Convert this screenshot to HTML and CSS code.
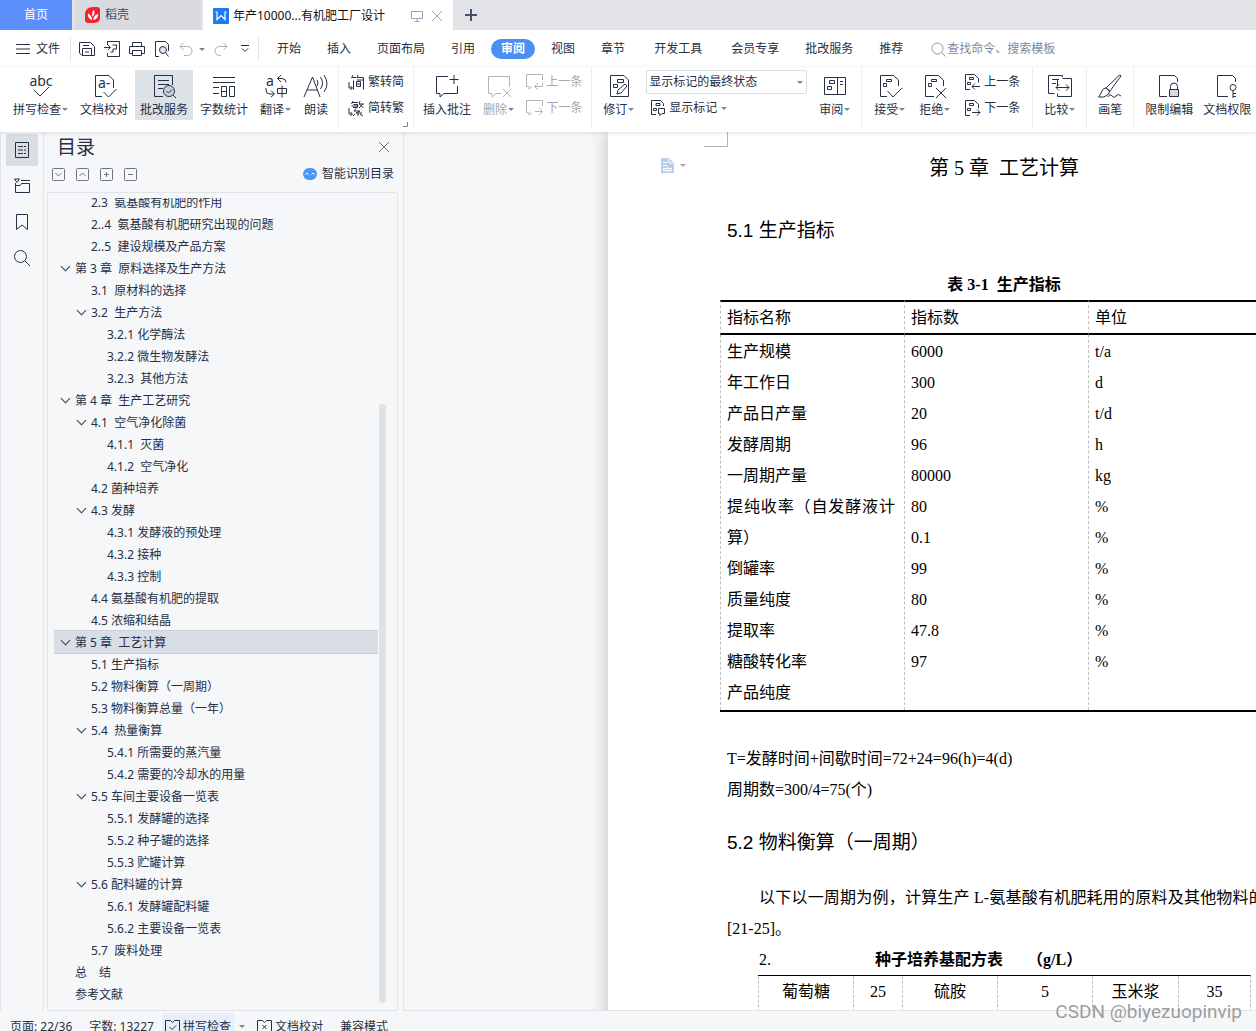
FILE: index.html
```html
<!DOCTYPE html>
<html lang="zh-CN">
<head>
<meta charset="utf-8">
<title>年产10000...有机肥工厂设计</title>
<link rel="stylesheet" href="styles.css">
</head>
<body>
<div class="app">
  <header class="tabs">
    <button class="tab tab-home">首页</button>
    <button class="tab tab-docer">
      <svg width="16" height="16" viewBox="0 0 16 16"><path d="M8 0h4q3 0 3 3v8q0 5-7 5H3q-3 0-3-3V8q0-8 8-8z" fill="#f5222d"/><path d="M7.200 13C3.500 11.500 2.500 9 3 6.500c2.300 1 3.800 3.200 4.200 6.500zM7.600 10C6.600 7 7 4.500 9 2.800c1 2.600.6 5-1.400 7.200zM8.300 13c0-3 1.500-5.300 4.900-6.300.3 3.300-1.500 5.500-4.900 6.300z" fill="#fff"/></svg>
      稻壳
    </button>
    <div class="tab tab-doc">
      <svg width="16" height="16" viewBox="0 0 16 16"><rect width="16" height="16" rx="1" fill="#1f7cf0"/><path d="M2.500 4H4v7.500l4-4 4 4V4h1.500" fill="none" stroke="#fff" stroke-width="1.200"/></svg>
      <span class="tab-name">年产10000...有机肥工厂设计</span>
      <svg class="dim" width="12" height="12" viewBox="0 0 12 12"><path d="M.5 1.500h11v7H.5zM6 8.500v3M3.500 11.500h5"/></svg>
      <button class="plain" aria-label="关闭"><svg class="dim" width="12" height="12" viewBox="0 0 12 12"><path d="M1 1l10 10M11 1L1 11"/></svg></button>
    </div>
    <button class="plain tab-add" aria-label="新建"><svg width="12" height="12" viewBox="0 0 12 12"><path d="M6 0v12M0 6h12" stroke="#45516d" stroke-width="2"/></svg></button>
  </header>

  <nav class="menubar">
    <button class="plain file"><svg width="14" height="10" viewBox="0 0 14 10"><path d="M0 .5h14M0 5h14M0 9.500h14"/></svg>文件</button>
    <div class="quick">
      <button class="plain" aria-label="保存"><svg width="16" height="16" viewBox="0 0 16 16"><path d="M.5 1.500h11l4 4v9H3L.5 12zM3.500 14V7.500h9V14M4 4.500h6M6 11h4"/></svg></button>
      <button class="plain" aria-label="输出为PDF"><svg width="16" height="16" viewBox="0 0 16 16"><path d="M3.500 4V.5h12v15h-12V12M0 6.500h6M4 4l2.500 2.500L4 9M8.500 4h4v4H9M9 8v3H6.500"/></svg></button>
      <button class="plain" aria-label="打印"><svg width="16" height="16" viewBox="0 0 16 16"><path d="M3.500 5V1.500h9V5M3.500 12.500h-3v-7h15v7h-3M3.500 9.500h9v5h-9z"/></svg></button>
      <button class="plain" aria-label="打印预览"><svg width="16" height="16" viewBox="0 0 16 16"><path d="M5 15.500H1.500V.5h10l3 3V10"/><circle cx="9" cy="9" r="3.500" fill="#dfe3ea"/><path d="M11.500 11.500l3 4"/></svg></button>
      <button class="plain undo" aria-label="撤销"><svg class="off" width="14" height="14" viewBox="0 0 14 14"><path d="M4.500 1L1 4.500 4.500 8M1 4.500h7.500a4.500 4.500 0 0 1 0 9H5"/></svg><i class="caret"></i></button>
      <button class="plain" aria-label="恢复"><svg class="off" width="14" height="14" viewBox="0 0 14 14"><path d="M9.500 1L13 4.500 9.500 8M13 4.500H5.500a4.500 4.500 0 0 0 0 9H7"/></svg></button>
      <button class="plain more" aria-label="自定义"><svg width="8" height="8" viewBox="0 0 8 8"><path d="M0 .5h8M1 3.500l3 3 3-3"/></svg></button>
    </div>
    <div class="menus">
      <button class="menu">开始</button><button class="menu">插入</button><button class="menu">页面布局</button><button class="menu">引用</button><button class="menu active">审阅</button><button class="menu">视图</button><button class="menu">章节</button><button class="menu wide">开发工具</button><button class="menu wide">会员专享</button><button class="menu">批改服务</button><button class="menu">推荐</button>
    </div>
    <label class="find"><svg width="15" height="15" viewBox="0 0 15 15"><circle cx="6.500" cy="6.500" r="5.500"/><path d="M10.500 10.500l4 4"/></svg><input type="text" placeholder="查找命令、搜索模板" aria-label="查找命令"></label>
  </nav>

  <section class="ribbon">
    <div class="group first">
      <button class="big"><svg width="26" height="24" viewBox="0 0 26 24"><text x="13" y="12" text-anchor="middle" class="glyph">abc</text><path d="M6 16l6 6 9-9"/></svg><span>拼写检查<i class="caret"></i></span></button>
      <button class="big"><svg width="24" height="24" viewBox="0 0 24 24"><path d="M10 22.500H3.500v-21H17l4.500 4.500v8M11.500 18l5 5 8-8"/><text x="6" y="14" class="glyph">a-</text></svg><span>文档校对</span></button>
      <button class="big on"><svg width="24" height="24" viewBox="0 0 24 24"><path d="M11 22.500H2.500v-21h18V11M6 6.500h11M6 10.500h11M6 14.500h5"/><circle cx="17" cy="17" r="5.500" fill="#c9d0d9"/><path d="M14.500 17l2 2 3.500-3.500M21 21l3 3"/></svg><span>批改服务</span></button>
      <button class="big"><svg width="24" height="24" viewBox="0 0 24 24"><path d="M1 3.500h22M1 8.500h22M1 13.500h6M1 19.500h6M9.500 12.500h5v10h-5zM9.500 17.500h5M17.500 12.500h5v10h-5z"/></svg><span>字数统计</span></button>
      <button class="big"><svg width="24" height="24" viewBox="0 0 24 24"><text x="2" y="12" class="glyph">a</text><path d="M17 1l-3.500 3.500L17 8M13.500 4.500H18a4 4 0 0 1 4 4M2 14v2a4 4 0 0 0 4 4h4M7 16.500l3.500 3.500L7 23M13.500 14.500h9v5h-9zM18 11.500v12"/></svg><span>翻译<i class="caret"></i></span></button>
      <button class="big"><svg width="26" height="24" viewBox="0 0 26 24"><path d="M1 23L9.500 3 17 23M4 16h10.500M14 6q2 3 0 6M17.500 3q4 6 0 12M21 1q6 9 0 17"/></svg><span>朗读</span></button>
    </div>
    <div class="group">
      <div class="stack">
        <button class="small"><svg width="17" height="16" viewBox="0 0 17 16"><path d="M5 1L3.500 4M10 1l-1 3M4 3.500h4M9 3.500h6.500v12M5.500 6.500v9M8.500 7.500h4v5h-4zM8.500 10h4M1 8v6h3M2.500 12l2 2-2 2M9 6h6"/></svg>繁转简</button>
        <button class="small"><svg width="17" height="16" viewBox="0 0 17 16"><path d="M5 1L3.500 4M4 2.500h6M5.500 4.500h4v3H5M3.500 6h7M12 1l-1 3h5M15 4l-4 4M11.500 4l4 4M8 8.500L6 11h6l-4 2h6M10 13v3M1 8v6h3M2.500 12l2 2-2 2M7 14l-2 2M12 14l3 2"/></svg>简转繁</button>
      </div>
      <svg class="corner" width="5" height="5" viewBox="0 0 5 5"><path d="M4.500 0v4.500H0"/></svg>
    </div>
    <div class="group">
      <button class="big"><svg width="24" height="24" viewBox="0 0 24 24"><path d="M13 2.500H1.500v17H5V23l4-3.500h13.500V12M19 1v9M14.500 5.500h9"/></svg><span>插入批注</span></button>
      <button class="big off"><svg width="24" height="24" viewBox="0 0 24 24"><path d="M14 19.500H9L5 23v-3.500H1.500v-17h21V13M16 15l8 8M24 15l-8 8"/></svg><span>删除<i class="caret"></i></span></button>
      <div class="stack">
        <button class="small off"><svg width="17" height="16" viewBox="0 0 17 16"><path d="M16.500 6V.5H.5v12H3V15l3-2.500M9 12.500h7.500V9M12 9l-3.500 3.500L12 16"/></svg>上一条</button>
        <button class="small off"><svg width="17" height="16" viewBox="0 0 17 16"><path d="M16.500 6V.5H.5v12H3V15l3-2.500M9 11.500h7M13 8l3.500 3.500L13 15"/></svg>下一条</button>
      </div>
    </div>
    <div class="group">
      <button class="big"><svg width="24" height="24" viewBox="0 0 24 24"><path d="M17 1.500H3.500v21h18V6L17 1.500M10.500 5.500h6v3h-6zM6.500 10.500h4v3h-4zM10 20l1-4 7-6 2 2-6 7z"/></svg><span>修订<i class="caret"></i></span></button>
      <div class="stack">
        <div class="view"><select aria-label="显示方式"><option>显示标记的最终状态</option></select><i class="caret"></i></div>
        <button class="small mark"><svg width="16" height="16" viewBox="0 0 16 16"><path d="M6 14.500H1.500V.5h9l3 3V6M6 3.500h4v2H6zM3.500 8.500h3v2h-3zM8.500 8.500h6v5H12L10 15.500v-2H8.500z"/></svg>显示标记<i class="caret"></i></button>
      </div>
      <button class="big"><svg width="24" height="24" viewBox="0 0 24 24"><path d="M1.500 3.500h21v17h-21zM14.500 3.500v17M6.500 6.500h5v3h-5zM4.500 12.500h4v3h-4zM17 7.500h3M17 10.500h3"/></svg><span>审阅<i class="caret"></i></span></button>
    </div>
    <div class="group changes">
      <button class="big"><svg width="24" height="24" viewBox="0 0 24 24"><path d="M9 22.500H2.500v-21h13L20.500 6v6M8.500 5.500h5v2h-5zM5.500 9.500h3v3h-3zM9.500 17l5.500 6 9-9"/></svg><span>接受<i class="caret"></i></span></button>
      <button class="big"><svg width="24" height="24" viewBox="0 0 24 24"><path d="M11 22.500H2.500v-21h13L20.500 6v6M8.500 5.500h5v2h-5zM5.500 9.500h3v3h-3zM13 14l10 10M23 14L13 24"/></svg><span>拒绝<i class="caret"></i></span></button>
      <div class="stack">
        <button class="small"><svg width="17" height="16" viewBox="0 0 17 16"><path d="M6 15.500H1.500V.5h9l4 4v4M5.500 3.500h4v2h-4zM3.500 8.500h3v2h-3zM8 12.500h8M11 9.500l-3 3 3 3"/></svg>上一条</button>
        <button class="small"><svg width="17" height="16" viewBox="0 0 17 16"><path d="M6 15.500H1.500V.5h9l4 4v4M5.500 3.500h4v2h-4zM3.500 8.500h3v2h-3zM8 12.500h8M13 9.500l3 3-3 3"/></svg>下一条</button>
      </div>
    </div>
    <div class="group">
      <button class="big"><svg width="26" height="24" viewBox="0 0 26 24"><path d="M15.500 3V1.500h-14v18h6M5 5.500h7M5 9.500h4M15.500 4.500h9v18h-14v-3M10.500 12v-7M9 13.500h13M12 10.500l-3 3 3 3M19 10.500l3 3-3 3"/></svg><span>比较<i class="caret"></i></span></button>
    </div>
    <div class="group">
      <button class="big"><svg width="24" height="24" viewBox="0 0 24 24"><path d="M8 14L21 1.500q1.500-1 2 .5L12 17zM8 14q-3 0-4 3t-3.500 6q6 1 9-2 2-2 2-4zM10 23q2-4 4-1t4 0 5 0"/></svg><span>画笔</span></button>
    </div>
    <div class="group last">
      <button class="big"><svg width="24" height="24" viewBox="0 0 24 24"><path d="M10 22.500H2.500v-21h15l3 3V8"/><path d="M13.500 15v-2.500a3.500 3.500 0 0 1 7 0V15"/><path d="M12.500 15.500h9v7h-9z" fill="#d5d9e0"/></svg><span>限制编辑</span></button>
      <button class="big"><svg width="24" height="24" viewBox="0 0 24 24"><path d="M13 22.500H2.500v-21h15l3 3V8"/><circle cx="18" cy="13.500" r="3"/><path d="M18 17v7M18 19.500h3M18 22.500h3"/></svg><span>文档权限</span></button>
    </div>
  </section>

  <main class="work">
    <aside class="rail">
      <button class="rail-btn on" aria-label="目录"><svg width="16" height="16" viewBox="0 0 16 16"><path d="M1.500.5h13v15h-13zM4 4.500h5M10 4.500h2M4 8h5M10 8h2M4 11.500h5M10 11.500h2"/></svg></button>
      <button class="rail-btn" aria-label="导航"><svg width="16" height="16" viewBox="0 0 16 16"><path d="M.5 1h5L3 4.500zM1.500 5v9.500h14v-9h-8L6 7.500H1.500M7 2.500h9"/></svg></button>
      <button class="rail-btn" aria-label="书签"><svg width="16" height="18" viewBox="0 0 16 18"><path d="M2.500 1.500h11v15L8 12l-5.500 4.500z"/></svg></button>
      <button class="rail-btn" aria-label="查找"><svg width="16" height="16" viewBox="0 0 16 16"><circle cx="6.500" cy="6.500" r="6"/><path d="M11 11l5 5"/></svg></button>
    </aside>

    <aside class="outline">
      <div class="outline-head"><h2>目录</h2><button class="plain" aria-label="关闭目录"><svg class="grey" width="10" height="10" viewBox="0 0 10 10"><path d="M0 0l10 10M10 0L0 10"/></svg></button></div>
      <div class="outline-tools">
        <button class="plain" aria-label="展开"><svg class="grey" width="13" height="13" viewBox="0 0 13 13"><rect x=".5" y=".5" width="12" height="12" rx="1"/><path d="M3.500 5l3 3 3-3"/></svg></button>
        <button class="plain" aria-label="折叠"><svg class="grey" width="13" height="13" viewBox="0 0 13 13"><rect x=".5" y=".5" width="12" height="12" rx="1"/><path d="M3.500 8l3-3 3 3"/></svg></button>
        <button class="plain" aria-label="升级"><svg class="grey" width="13" height="13" viewBox="0 0 13 13"><rect x=".5" y=".5" width="12" height="12" rx="1"/><path d="M4 6.500h5M6.500 4v5"/></svg></button>
        <button class="plain" aria-label="降级"><svg class="grey" width="13" height="13" viewBox="0 0 13 13"><rect x=".5" y=".5" width="12" height="12" rx="1"/><path d="M4 6.500h5"/></svg></button>
        <button class="plain smart"><svg width="14" height="12" viewBox="0 0 14 12"><rect width="14" height="12" rx="6" fill="#4a97f5" stroke="none"/><path d="M2.500 6.500l1.500-1.500 1.500 1.500M8.500 6.500L10 5l1.500 1.500" stroke="#fff"/></svg>智能识别目录</button>
      </div>
      <div class="tree">
        <ul>
          <li class="l2">2.3&nbsp; 氨基酸有机肥的作用</li>
          <li class="l2">2..4&nbsp; 氨基酸有机肥研究出现的问题</li>
          <li class="l2">2..5&nbsp; 建设规模及产品方案</li>
          <li class="l1 open">第 3 章&nbsp; 原料选择及生产方法</li>
          <li class="l2">3.1&nbsp; 原材料的选择</li>
          <li class="l2 open">3.2&nbsp; 生产方法</li>
          <li class="l3">3.2.1 化学酶法</li>
          <li class="l3">3.2.2 微生物发酵法</li>
          <li class="l3">3.2.3&nbsp; 其他方法</li>
          <li class="l1 open">第 4 章&nbsp; 生产工艺研究</li>
          <li class="l2 open">4.1&nbsp; 空气净化除菌</li>
          <li class="l3">4.1.1&nbsp; 灭菌</li>
          <li class="l3">4.1.2&nbsp; 空气净化</li>
          <li class="l2">4.2 菌种培养</li>
          <li class="l2 open">4.3 发酵</li>
          <li class="l3">4.3.1 发酵液的预处理</li>
          <li class="l3">4.3.2 接种</li>
          <li class="l3">4.3.3 控制</li>
          <li class="l2">4.4 氨基酸有机肥的提取</li>
          <li class="l2">4.5 浓缩和结晶</li>
          <li class="l1 open current">第 5 章&nbsp; 工艺计算</li>
          <li class="l2">5.1 生产指标</li>
          <li class="l2">5.2 物料衡算（一周期）</li>
          <li class="l2">5.3 物料衡算总量（一年）</li>
          <li class="l2 open">5.4&nbsp; 热量衡算</li>
          <li class="l3">5.4.1 所需要的蒸汽量</li>
          <li class="l3">5.4.2 需要的冷却水的用量</li>
          <li class="l2 open">5.5 车间主要设备一览表</li>
          <li class="l3">5.5.1 发酵罐的选择</li>
          <li class="l3">5.5.2 种子罐的选择</li>
          <li class="l3">5.5.3 贮罐计算</li>
          <li class="l2 open">5.6 配料罐的计算</li>
          <li class="l3">5.6.1 发酵罐配料罐</li>
          <li class="l3">5.6.2 主要设备一览表</li>
          <li class="l2">5.7&nbsp; 废料处理</li>
          <li class="l1">总　结</li>
          <li class="l1">参考文献</li>
        </ul>
        <div class="track"><div class="thumb"></div></div>
      </div>
    </aside>

    <section class="canvas">
      <article class="page">
        <i class="crop"></i>
        <button class="plain para-mark" aria-label="段落布局"><svg width="13" height="15" viewBox="0 0 13 15"><path d="M0 0h8l5 5v10H0z" fill="#b9cdec" stroke="none"/><path d="M8 0v5h5M2 4.500h4M2 7.500h4M2.500 10.500h8v2h-8zM6.500 9v1.500M6.500 12.500V14" stroke="#fff"/></svg><i class="caret"></i></button>
        <h1>第 5 章&nbsp; 工艺计算</h1>
        <h2>5.1 生产指标</h2>
        <table class="indicators">
          <caption>表 3-1&nbsp; 生产指标</caption>
          <colgroup><col class="wide-col"><col class="wide-col"><col></colgroup>
          <thead><tr><th>指标名称</th><th>指标数</th><th>单位</th></tr></thead>
          <tbody><tr>
            <td><p>生产规模</p><p>年工作日</p><p>产品日产量</p><p>发酵周期</p><p>一周期产量</p><p>提纯收率（自发酵液计算）</p><p>倒罐率</p><p>质量纯度</p><p>提取率</p><p>糖酸转化率</p><p>产品纯度</p></td>
            <td><p>6000</p><p>300</p><p>20</p><p>96</p><p>80000</p><p>80</p><p>0.1</p><p>99</p><p>80</p><p>47.8</p><p>97</p></td>
            <td class="unit"><p>t/a</p><p>d</p><p>t/d</p><p>h</p><p>kg</p><p>%</p><p>%</p><p>%</p><p>%</p><p>%</p><p>%</p></td>
          </tr></tbody>
        </table>
        <p>T=发酵时间+间歇时间=72+24=96(h)=4(d)</p>
        <p>周期数=300/4=75(个)</p>
        <h2 class="second">5.2 物料衡算（一周期）</h2>
        <p class="indent">以下以一周期为例，计算生产 L-氨基酸有机肥耗用的原料及其他物料的量[21-25]。</p>
        <p class="recipe-title"><span>2.</span><b>种子培养基配方表</b><b>（g/L）</b></p>
        <table class="recipe"><colgroup><col class="c1"><col class="c2"><col class="c3"><col class="c3"><col class="c4"><col class="c5"></colgroup>
          <tr><td>葡萄糖</td><td>25</td><td>硫胺</td><td>5</td><td>玉米浆</td><td>35</td></tr></table>
      </article>
    </section>
  </main>

  <footer class="status">
    <span class="st">页面: 22/36</span><span class="st">字数: 13227</span>
    <button class="plain st hot"><svg width="15" height="14" viewBox="0 0 15 14"><path d="M5.500.5h-5v13h14V.5h-5L7.500 2.500zM4.500 7l2.500 2.500L11 5.500"/></svg>拼写检查</button><i class="caret"></i>
    <button class="plain st check"><svg width="15" height="14" viewBox="0 0 15 14"><path d="M5.500.5h-5v13h14V.5h-5L7.500 2.500zM5.500 5l4 4M9.500 5l-4 4"/></svg>文档校对</button><span class="st">兼容模式</span>
  </footer>
  <div class="watermark">CSDN @biyezuopinvip</div>
</div>
</body>
</html>
```
FILE: styles.css
```css
* { box-sizing: border-box; }
body {
  margin: 0;
  font: 12px/16px "Noto Sans", "Noto Sans CJK SC", sans-serif;
  color: #262f45;
  background: #f6f7f9;
}
button, input, select { font: inherit; color: inherit; }
button { border: 0; background: none; padding: 0; white-space: nowrap; }
h1, h2, p, ul { margin: 0; padding: 0; }
svg { display: block; flex: none; overflow: visible; fill: none; stroke: #262f45; stroke-width: 1; }
.app {
  position: relative;
  height: 100vh;
  display: flex;
  flex-direction: column;
  overflow: hidden;
}
.plain { display: inline-flex; align-items: center; }
.caret {
  display: inline-block;
  flex: none;
  border: 3px solid transparent;
  border-top: 3px solid #7c859a;
  border-bottom: 0;
}
svg.off { stroke: #a9aeb8; }
svg.grey { stroke: #70757f; }

/* window tabs */
.tabs { display: flex; flex: none; height: 30px; background: #e2e4e8; }
.tabs svg { stroke: none; }
.tabs svg.dim { stroke: #98a3bb; }
.tab { display: flex; align-items: center; }
.tab-home { width: 72px; justify-content: center; background: #5d8ffc; color: #fff; }
.tab-docer { width: 126px; margin: 0 2px 0 3px; padding-left: 10px; gap: 4px; background: #d9dbdf; color: #454b58; }
.tab-doc { width: 250px; padding: 2px 10px 0; gap: 4px; background: #fff; color: #111; }
.tab-name { flex: 1; }
.tab-doc .plain { margin-left: 4px; }
.tab-add { margin-left: 12px; }

/* menu row */
.menubar { display: flex; flex: none; align-items: center; height: 37px; padding-top: 1px; background: #fff; }
.file { gap: 6px; padding: 0 10px 0 16px; height: 24px; border-right: 1px solid #e0e2e6; }
.quick { display: flex; align-items: center; gap: 9px; height: 24px; padding: 0 9px 0 8px; border-right: 1px solid #e0e2e6; }
.undo { gap: 6px; }
.more { margin-left: 4px; }
.menus { display: flex; padding-left: 5px; }
.menu { height: 20px; padding: 0 10px; margin: 0 3px; }
.menu.wide { margin-left: 6px; }
.menu.active { border-radius: 10px; background: #4a8ff2; color: #fff; font-weight: bold; }
.find { display: flex; align-items: center; flex: 1; margin-left: 15px; gap: 1px; }
.find svg { stroke: #8b96ae; }
.find input { flex: 1; min-width: 0; border: 0; padding: 0; outline: 0; background: none; }
.find input::placeholder { color: #7e88a0; opacity: 1; }

/* ribbon */
.ribbon { position: relative; z-index: 2; display: flex; flex: none; height: 65px; background: #fff; box-shadow: 0 1px 4px #0000001f; }
.group { position: relative; display: flex; flex: none; gap: 2px; height: 62px; padding: 3px 6px 0; border-right: 1px solid #eceef0; }
.group:nth-child(-n+3) { padding: 3px 4px 0; }
.group.first { padding-left: 8px; }
.group.changes { gap: 4px; padding: 3px 7px 0; }
.group.last { gap: 0; border: 0; }
.big { display: flex; flex-direction: column; align-items: center; height: 50px; padding: 4px 5px 0; gap: 4px; }
.big.on { background: #dde2e7; }
.big .caret { margin: 0 0 3px 1px; }
.off { color: #a3a7af; }
.off svg { stroke: #b0b4bc; }
.glyph { font: 14px "Noto Sans", sans-serif; fill: #262f45; stroke: none; }
.stack { display: flex; flex-direction: column; gap: 2px; padding: 0 5px; }
.small { display: flex; align-items: center; gap: 3px; height: 24px; }
.small .caret { margin-left: 1px; }
.mark { padding-left: 4px; }
.view {
  display: flex;
  align-items: center;
  width: 161px;
  height: 24px;
  padding-right: 3px;
  border: 1px solid #d9dce1;
  border-radius: 2px;
}
.view select { flex: 1; appearance: none; border: 0; padding: 0 2px; background: none; }
.corner { position: absolute; right: 5px; bottom: 2px; stroke: #7c859a; }

/* work area */
.work { display: flex; flex: 1; min-height: 0; }
.rail { display: flex; flex: none; flex-direction: column; align-items: center; gap: 4px; width: 44px; padding-top: 2px; border-right: 1px solid #e1e4e8; border-left: 1px solid #e1e4e8; }
.rail-btn { display: flex; align-items: center; justify-content: center; width: 32px; height: 32px; border-radius: 2px; }
.rail-btn.on { background: #d9dee5; }
.outline { display: flex; flex: none; flex-direction: column; width: 360px; padding: 0 5px 0 3px; border-right: 1px solid #e1e4e8; }
.outline-head { display: flex; justify-content: space-between; align-items: center; height: 30px; padding: 0 9px 0 10px; }
.outline-head h2 { font-size: 19px; line-height: 28px; font-weight: normal; }
.outline-tools { display: flex; align-items: center; gap: 11px; height: 24px; padding: 0 4px 0 5px; }
.smart { margin-left: auto; gap: 5px; }
.tree { display: flex; flex: 1; min-height: 0; margin-top: 6px; padding: 5px 11px 0 6px; border: 1px solid #e0e3e8; border-radius: 2px; overflow: hidden; }
.tree ul { flex: 1; list-style: none; overflow: hidden; }
.tree li { height: 22px; line-height: 24px; white-space: nowrap; }
.tree li:first-child { margin-top: -7px; }
.tree .l1 { padding-left: 21px; }
.tree .l2 { padding-left: 37px; }
.tree .l3 { padding-left: 53px; }
.tree .current { background: #d9dde6; box-shadow: 0 0 0 1px #cbd1da; }
.open::before {
  content: "";
  display: inline-block;
  width: 6px;
  height: 6px;
  margin: 0 6px 3px -13px;
  border: solid #39425a;
  border-width: 0 1px 1px 0;
  transform: rotate(45deg);
}
.track { width: 8px; padding: 206px 0 7px 1px; }
.thumb { height: 100%; border-radius: 4px; background: #dee2e5; }

/* document */
.canvas { flex: 1; min-width: 0; padding-left: 204px; overflow: hidden; border-bottom: 1px solid #dfe2e6; }
.page {
  position: relative;
  width: 793px;
  min-height: 1122px;
  padding: 20px 120px 0 119px;
  background: #fff;
  color: #000;
  box-shadow: 0 0 18px #0000003d;
  font: 16px/31px "Liberation Serif", "Noto Sans CJK SC", serif;
}
.page h1 { font-size: 20px; line-height: 32px; font-weight: normal; text-align: center; }
.page h2 { margin-top: 31px; font: 19px/32px "Liberation Sans", "Noto Sans CJK SC", sans-serif; }
.page .second { margin-top: 22px; }
.crop { position: absolute; top: 0; left: 96px; width: 24px; height: 15px; border: solid #b4b4b4; border-width: 0 1px 1px 0; }
.para-mark { position: absolute; top: 26px; left: 53px; gap: 6px; }
.para-mark .caret { border-top-color: #a9a9a9; }
.indicators { width: 568px; margin: 22px 0 31px -7px; table-layout: fixed; border-spacing: 0; border-bottom: 2px solid #000; }
.wide-col { width: 184px; }
.indicators caption { font-weight: bold; }
.indicators th, .indicators td { padding: 0 9px 0 6px; border-left: 1px dashed #bfbfbf; text-align: justify; vertical-align: top; font-weight: normal; }
.indicators th { border-top: 2px solid #000; border-bottom: 2px solid #000; }
.indicators td { padding-top: 1px; padding-bottom: 2px; }
.indent { margin-top: 23px; text-indent: 32px; text-align: justify; }
.recipe-title { display: flex; padding-left: 32px; }
.recipe-title span { width: 116px; }
.recipe-title b + b { margin-left: 24px; }
.recipe { width: 493px; margin-left: 31px; table-layout: fixed; border-spacing: 0; border-top: 1px solid #000; border-right: 1px dashed #bfbfbf; }
.recipe td { height: 36px; padding: 0; border-left: 1px dashed #bfbfbf; text-align: center; vertical-align: top; }
.c1 { width: 95px; }
.c2 { width: 49px; }
.c3 { width: 95px; }
.c4 { width: 86px; }
.c5 { width: 72px; }

/* status bar */
.status { display: flex; flex: none; align-items: flex-start; height: 20px; padding-left: 10px; overflow: hidden; }
.st { flex: none; height: 32px; line-height: 32px; margin-right: 17px; gap: 3px; }
.hot { margin: 2px 5px 0 -9px; height: 28px; padding: 0 3px 0 3px; background: #e6effb; line-height: 28px; }
.status > .caret { margin-top: 14px; }
.check { margin-left: 12px; }
.watermark { position: absolute; right: 14px; bottom: 7px; z-index: 3; font: 19px/24px Roboto, sans-serif; color: #8c8c8cd9; }
```
